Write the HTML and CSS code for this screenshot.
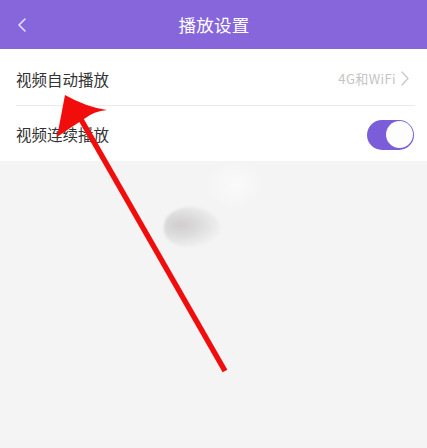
FILE: index.html
```html
<!DOCTYPE html>
<html lang="zh">
<head>
<meta charset="utf-8">
<link rel="stylesheet" href="styles.css">
</head>
<body>
<div class="page">
  <header class="bar">
    <svg class="back" width="12" height="16" viewBox="0 0 12 16"><path d="M9 2 L3 8 L9 14" fill="none" stroke="#e6ddfb" stroke-width="1.6" stroke-linecap="round" stroke-linejoin="round"/></svg>
    <div class="title">播放设置</div>
  </header>
  <div class="list">
    <div class="row">
      <span class="label">视频自动播放</span>
      <span class="value">4G和WiFi
        <svg class="chev" width="10" height="15" viewBox="0 0 10 15"><path d="M2 1 L8 7.5 L2 14" fill="none" stroke="#c8c8c8" stroke-width="1.3" stroke-linecap="round" stroke-linejoin="round"/></svg>
      </span>
    </div>
    <div class="row">
      <span class="label">视频连续播放</span>
      <span class="toggle"><span class="knob"></span></span>
    </div>
  </div>
  <div class="blob"></div>
  <div class="glow"></div>
  <svg class="arrow" width="427" height="448" viewBox="0 0 427 448">
    <line x1="79" y1="116" x2="225" y2="371" stroke="#f20d0d" stroke-width="5.5" stroke-linecap="butt"/>
    <path d="M65 95 Q86 107 107 110 Q94 111 84 119 Q70 128 57 137 Q61 116 65 95 Z" fill="#f20d0d"/>
  </svg>
</div>
</body>
</html>
```
FILE: styles.css
```css
* { box-sizing: border-box; }
html, body { margin: 0; padding: 0; }
body {
  width: 427px;
  height: 448px;
  background: #f4f4f4;
  font-family: "Noto Sans CJK SC", "Noto Sans", sans-serif;
  overflow: hidden;
}
.page { position: relative; width: 427px; height: 448px; }
.bar {
  height: 49px;
  background: #8766dc;
  display: flex;
  align-items: center;
  justify-content: center;
  position: relative;
}
.back { position: absolute; left: 16px; top: 17px; }
.title {
  color: #ffffff;
  font-size: 17.5px;
  letter-spacing: 0.2px;
  margin-left: 1px;
}
.list { background: #ffffff; }
.row {
  height: 56px;
  margin-left: 16px;
  padding-right: 13px;
  display: flex;
  align-items: center;
  justify-content: space-between;
}
.row + .row { border-top: 1px solid #ebebeb; margin-right: 12px; padding-right: 1px; }
.row:first-child { margin-right: 12px; padding-right: 5px; padding-top: 3px; }
.label { color: #333333; font-size: 15.5px; }
.value {
  color: #c4c4c4;
  font-size: 13px;
  letter-spacing: 0.4px;
  display: flex;
  align-items: center;
  gap: 4px;
}
.toggle {
  width: 47px;
  height: 30px;
  border-radius: 15px;
  background: #7b5dd9;
  display: flex;
  align-items: center;
  justify-content: flex-end;
  padding-right: 1px;
  margin-top: 2px;
}
.knob {
  width: 27px;
  height: 27px;
  border-radius: 50%;
  background: #fdfdfd;
}
.blob {
  position: absolute;
  left: 164px;
  top: 207px;
  width: 56px;
  height: 40px;
  border-radius: 50% 55% 50% 45%;
  background: radial-gradient(ellipse at 30% 45%, #cfcdcd 0%, #e0dfdf 40%, rgba(244,244,244,0) 78%);
  filter: blur(1px);
}
.glow {
  position: absolute;
  left: 205px;
  top: 160px;
  width: 60px;
  height: 50px;
  border-radius: 50%;
  background: radial-gradient(ellipse, #fafafa 0%, rgba(244,244,244,0) 70%);
}
.arrow { position: absolute; left: 0; top: 0; }
```
